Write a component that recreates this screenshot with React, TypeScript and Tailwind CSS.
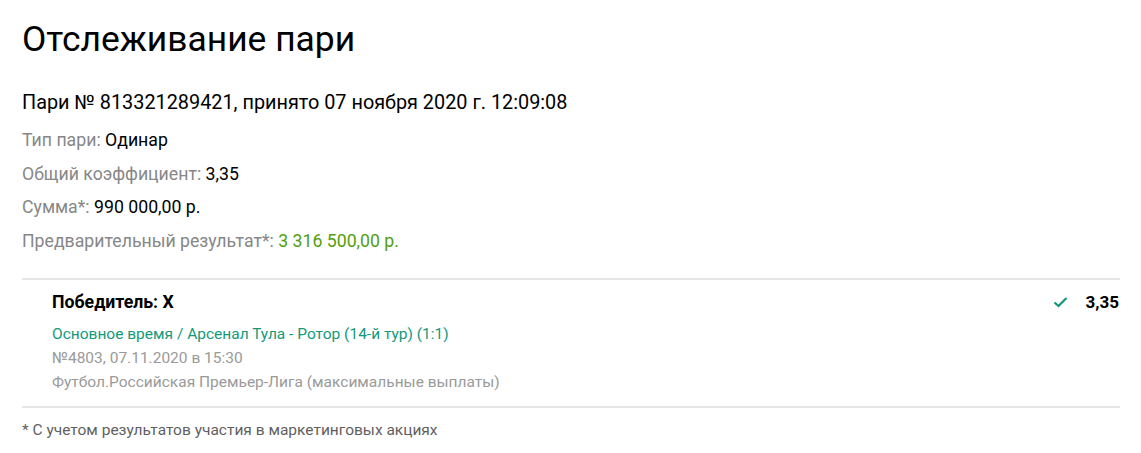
import React from 'react';

const rows = [
  { label: 'Тип пари:', value: 'Одинар', green: false },
  { label: 'Общий коэффициент:', value: '3,35', green: false },
  { label: 'Сумма*:', value: '990 000,00 р.', green: false },
  { label: 'Предварительный результат*:', value: '3 316 500,00 р.', green: true },
];

export default function App() {
  return (
    <div className="min-h-screen bg-white px-[22px] pt-[14px] text-black" style={{ fontFamily: 'Roboto, "Noto Sans", sans-serif' }}>
      <h1 className="text-[35.4px] leading-[50px] font-normal">Отслеживание пари</h1>

      <div className="mt-[26px] text-[19.85px] leading-[26px]">
        Пари № 813321289421, принято 07 ноября 2020 г. 12:09:08
      </div>

      <div className="mt-[8px] flex flex-col">
        {rows.map((r) => (
          <div key={r.label} className="text-[17.7px] leading-[33.5px]">
            <span className="text-[#878787]">{r.label}</span>{' '}
            <span className={r.green ? 'text-[#52a00e]' : 'text-black'}>{r.value}</span>
          </div>
        ))}
      </div>

      <div className="mt-[20px] border-t-2 border-[#e6e6e6] w-[1098px]">
        <div className="flex items-start justify-between pl-[30px] pt-[10px] pb-[12px]">
          <div className="flex flex-col">
            <div className="text-[17.7px] leading-[24px] font-bold">Победитель: X</div>
            <div className="mt-[8px] text-[15.5px] leading-[24px] text-[#14997a]">
              Основное время / Арсенал Тула - Ротор (14-й тур) (1:1)
            </div>
            <div className="text-[15.5px] leading-[24px] text-[#9a9a9a]">№4803, 07.11.2020 в 15:30</div>
            <div className="text-[15.5px] leading-[24px] text-[#9a9a9a]">
              Футбол.Российская Премьер-Лига (максимальные выплаты)
            </div>
          </div>
          <div className="flex items-center gap-[18px] pr-[1px]">
            <svg width="15" height="12" viewBox="0 0 15 12" fill="none">
              <path d="M1.5 6.5 L5.5 10 L13.5 2" stroke="#14997a" strokeWidth="2.3" />
            </svg>
            <span className="text-[17px] leading-[24px] font-bold">3,35</span>
          </div>
        </div>
      </div>

      <div className="border-t-2 border-[#e6e6e6] w-[1098px] pt-[10px] text-[15.5px] leading-[24px] text-[#5f5f5f]">
        * С учетом результатов участия в маркетинговых акциях
      </div>
    </div>
  );
}
